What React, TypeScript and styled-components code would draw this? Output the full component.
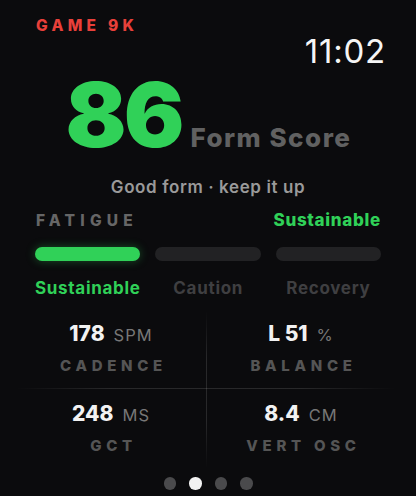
import React from "react";
import styled, { createGlobalStyle } from "styled-components";

const GREEN = "#30d158";

const GlobalStyle = createGlobalStyle`
  html, body {
    margin: 0;
    padding: 0;
    background: #0b0b0d;
  }
  body {
    font-family: Inter, "Noto Sans", sans-serif;
  }
`;

type Zone = { label: string; active: boolean };

const zones: Zone[] = [
  { label: "Sustainable", active: true },
  { label: "Caution", active: false },
  { label: "Recovery", active: false },
];

type Stat = { value: string; unit: string; label: string };

const stats: Stat[] = [
  { value: "178", unit: "SPM", label: "CADENCE" },
  { value: "L 51", unit: "%", label: "BALANCE" },
  { value: "248", unit: "MS", label: "GCT" },
  { value: "8.4", unit: "CM", label: "VERT OSC" },
];

const App: React.FunctionComponent = () => {
  return (
    <Screen>
      <GlobalStyle />
      <Top>
        <GameTag>GAME 9K</GameTag>
        <Clock>11:02</Clock>
      </Top>
      <ScoreRow>
        <Score>86</Score>
        <ScoreLabel>Form Score</ScoreLabel>
      </ScoreRow>
      <Subtitle>Good form · keep it up</Subtitle>
      <FatigueHead>
        <SectionTitle>FATIGUE</SectionTitle>
        <FatigueState>Sustainable</FatigueState>
      </FatigueHead>
      <Bars>
        {zones.map((z) => (
          <Bar key={z.label} active={z.active} />
        ))}
      </Bars>
      <ZoneLabels>
        {zones.map((z) => (
          <ZoneLabel key={z.label} active={z.active}>
            {z.label}
          </ZoneLabel>
        ))}
      </ZoneLabels>
      <StatGrid>
        {stats.map((s, i) => (
          <StatCell key={s.label} bottom={i > 1}>
            <StatValue>
              {s.value}
              <Unit>{s.unit}</Unit>
            </StatValue>
            <StatLabel>{s.label}</StatLabel>
          </StatCell>
        ))}
        <VLine />
        <HLine />
      </StatGrid>
      <Dots>
        {[0, 1, 2, 3].map((i) => (
          <Dot key={i} active={i === 1} />
        ))}
      </Dots>
    </Screen>
  );
};

export default App;

const Screen = styled.main`
  width: 416px;
  height: 496px;
  box-sizing: border-box;
  padding: 17px 35px 0 35px;
  background: #0b0b0d;
  display: flex;
  flex-direction: column;
  overflow: hidden;
`;

const Top = styled.header`
  display: flex;
  flex-direction: column;
`;

const GameTag = styled.div`
  color: #e8403a;
  font-size: 15.5px;
  font-weight: 800;
  letter-spacing: 4.3px;
  line-height: 18px;
  padding-left: 1px;
`;

const Clock = styled.div`
  align-self: flex-end;
  margin-top: -3px;
  margin-right: -5px;
  color: #f5f5f5;
  font-size: 33px;
  font-weight: 400;
  letter-spacing: 0.8px;
  line-height: 38px;
`;

const ScoreRow = styled.div`
  display: flex;
  justify-content: center;
  align-items: baseline;
  gap: 9px;
  margin-top: 2px;
  padding-left: 1px;
`;

const Score = styled.div`
  color: ${GREEN};
  font-size: 90px;
  font-weight: 900;
  letter-spacing: -3px;
  line-height: 86px;
`;

const ScoreLabel = styled.div`
  color: #616161;
  font-size: 26px;
  font-weight: 800;
  letter-spacing: 1.5px;
  line-height: 30px;
`;

const Subtitle = styled.div`
  margin-top: 19px;
  text-align: center;
  color: #9a9a9a;
  font-size: 17px;
  font-weight: 600;
  letter-spacing: 0.6px;
  line-height: 20px;
`;

const FatigueHead = styled.div`
  display: flex;
  justify-content: space-between;
  align-items: baseline;
  margin-top: 13px;
`;

const SectionTitle = styled.div`
  color: #666;
  font-size: 15.5px;
  font-weight: 800;
  letter-spacing: 5.2px;
  line-height: 20px;
  padding-left: 1px;
`;

const FatigueState = styled.div`
  color: ${GREEN};
  font-size: 17px;
  font-weight: 800;
  letter-spacing: 0.7px;
  line-height: 20px;
`;

const Bars = styled.div`
  display: grid;
  grid-template-columns: repeat(3, 1fr);
  gap: 15px;
  margin-top: 16px;
`;

const Bar = styled.div<{ active: boolean }>`
  height: 14px;
  border-radius: 7px;
  background: ${(p) => (p.active ? GREEN : "#222224")};
  box-shadow: ${(p) => (p.active ? "0 0 10px rgba(48, 209, 88, 0.35)" : "none")};
`;

const ZoneLabels = styled(Bars)`
  margin-top: 17px;
`;

const ZoneLabel = styled.div<{ active: boolean }>`
  text-align: center;
  color: ${(p) => (p.active ? GREEN : "#3f3f41")};
  font-size: 17px;
  font-weight: 700;
  letter-spacing: 0.7px;
  line-height: 20px;
`;

const StatGrid = styled.section`
  position: relative;
  display: grid;
  grid-template-columns: 1fr 1fr;
  grid-template-rows: 77px 80px;
  margin: 13px -15px 0 -19px;
`;

const StatCell = styled.div<{ bottom: boolean }>`
  display: flex;
  flex-direction: column;
  align-items: center;
  padding-top: ${(p) => (p.bottom ? "13px" : "10px")};
`;

const StatValue = styled.div`
  display: flex;
  align-items: baseline;
  color: #f2f2f2;
  font-size: 21px;
  font-weight: 800;
  line-height: 25px;
`;

const Unit = styled.span`
  margin-left: 9px;
  color: #777;
  font-size: 16.5px;
  font-weight: 400;
  letter-spacing: 1px;
`;

const StatLabel = styled.div`
  margin-top: 9px;
  color: #555;
  font-size: 15px;
  font-weight: 800;
  letter-spacing: 4.7px;
  line-height: 18px;
  padding-left: 5px;
`;

const VLine = styled.div`
  position: absolute;
  left: 50%;
  top: 0;
  bottom: 0;
  width: 1px;
  background: linear-gradient(
    to bottom,
    rgba(255, 255, 255, 0),
    rgba(255, 255, 255, 0.12) 30%,
    rgba(255, 255, 255, 0.12) 70%,
    rgba(255, 255, 255, 0)
  );
`;

const HLine = styled.div`
  position: absolute;
  left: 0;
  right: 0;
  top: 77px;
  height: 1px;
  background: linear-gradient(
    to right,
    rgba(255, 255, 255, 0),
    rgba(255, 255, 255, 0.12) 25%,
    rgba(255, 255, 255, 0.12) 75%,
    rgba(255, 255, 255, 0)
  );
`;

const Dots = styled.div`
  display: flex;
  justify-content: center;
  gap: 13px;
  margin-top: 9px;
`;

const Dot = styled.div<{ active: boolean }>`
  width: 12.5px;
  height: 12.5px;
  border-radius: 50%;
  background: ${(p) => (p.active ? "#f2f2f2" : "#4a4a4c")};
`;
